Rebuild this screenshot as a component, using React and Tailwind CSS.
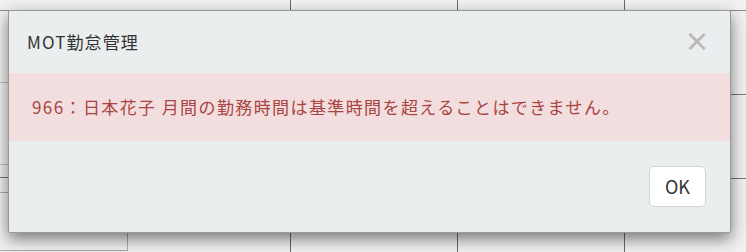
const jp = { fontFamily: '"Noto Sans CJK JP", "Noto Sans", sans-serif' };

function Backdrop() {
  return (
    <div className="absolute inset-0 flex flex-col bg-[#f1f1f1]">
      <div className="grid h-[11px] grid-cols-[291px_167px_167px_1fr] border-b border-[#8a8a8a]">
        <div className="border-r border-[#6a6a6a]" />
        <div className="border-r border-[#6a6a6a]" />
        <div className="border-r border-[#6a6a6a]" />
        <div />
      </div>
      <div className="grid flex-1 grid-cols-[291px_167px_167px_1fr]">
        <div className="flex flex-col border-r border-[#6a6a6a]">
          <div className="h-[72px] border-b border-[#bbb]" />
          <div className="h-[82px] border-b border-[#bbb]" />
          <div className="h-[13px] border-b border-[#777]" />
          <div className="h-[15px] border-b border-[#aaa]" />
          <div className="flex flex-1">
            <div className="mb-[1px] w-[128px] border-r border-b border-[#aaa]" />
          </div>
        </div>
        <div className="border-r border-[#6a6a6a]" />
        <div className="border-r border-[#6a6a6a]" />
        <div className="flex flex-col">
          <div className="h-[84px] border-b border-[#777]" />
          <div className="h-[84px] border-b border-[#777]" />
        </div>
      </div>
    </div>
  );
}

export default function App() {
  return (
    <div className="relative h-[252px] w-[746px] overflow-hidden" style={jp}>
      <Backdrop />
      <div className="absolute left-[8px] top-[10px] flex h-[223px] w-[723px] flex-col rounded-[2px] border border-[#9a9a9a] bg-[#ebeeef] shadow-[0_6px_16px_rgba(0,0,0,0.5)]">
        <div className="flex h-[62px] items-center justify-between pl-[18px] pr-[20px]">
          <h4 className="text-[17px] tracking-[1.1px] text-[#333]">MOT勤怠管理</h4>
          <button className="mt-[-4px] text-[26px] font-bold leading-none text-[#b8b8b8]">×</button>
        </div>
        <div className="flex h-[68px] items-center bg-[#f2dede] pl-[23px] text-[17px] tracking-[1.4px] text-[#a94442]">
          966：日本花子 月間の勤務時間は基準時間を超えることはできません。
        </div>
        <div className="flex flex-1 items-center justify-end pr-[24px]">
          <button className="h-[41px] w-[57px] rounded-[5px] border border-[#d4d4d4] bg-white text-[18px] text-[#333]">
            OK
          </button>
        </div>
      </div>
    </div>
  );
}
